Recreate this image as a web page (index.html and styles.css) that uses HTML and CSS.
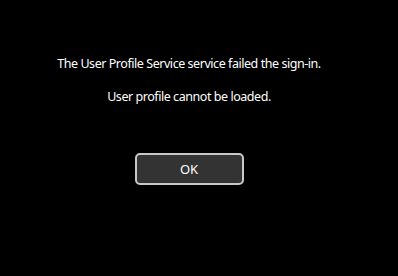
FILE: index.html
```html
<!DOCTYPE html>
<html>
<head>
<meta charset="utf-8">
<link rel="stylesheet" href="styles.css">
</head>
<body>
<div class="dialog">
  <p class="msg">The User Profile Service service failed the sign-in.</p>
  <p class="msg second">User profile cannot be loaded.</p>
  <button class="ok">OK</button>
</div>
</body>
</html>
```

FILE: styles.css
```css
html, body {
  margin: 0;
  padding: 0;
  background: #000;
  width: 398px;
  height: 276px;
  overflow: hidden;
}
.dialog {
  display: flex;
  flex-direction: column;
  align-items: center;
  padding: 55px 20px 0 0;
  font-family: "Noto Sans", sans-serif;
  color: #fff;
}
.msg {
  margin: 0;
  font-size: 12.5px;
  letter-spacing: -0.45px;
  line-height: 18px;
}
.second {
  margin-top: 15px;
}
.ok {
  margin-top: 47px;
  width: 109px;
  height: 32px;
  box-sizing: border-box;
  background: #333;
  border: 2px solid #c8c8c8;
  border-radius: 5px;
  color: #fff;
  font-family: "Noto Sans", sans-serif;
  font-size: 13px;
  padding: 0;
}
```
